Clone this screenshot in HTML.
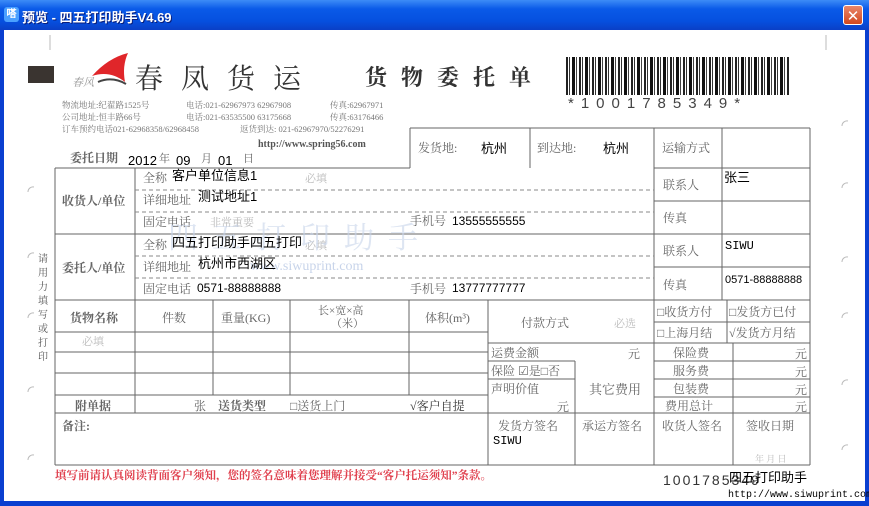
<!DOCTYPE html>
<html><head><meta charset="utf-8"><style>
html,body{margin:0;padding:0;width:869px;height:506px;overflow:hidden;background:#0a3fd0;}
#title{position:absolute;left:0;top:0;width:869px;height:30px;background:linear-gradient(#3d8cf7,#0a5ae8 30%,#0650df 70%,#0a3fc6);}
#title span{position:absolute;left:22px;top:7px;color:#fff;font:bold 13px "Liberation Sans","Noto Sans CJK SC",sans-serif;text-shadow:1px 1px #0a1e7a;}
#ico{position:absolute;left:4px;top:7px;width:15px;height:15px;background:#4aa0ff;border-radius:3px;color:#fff;font:bold 10px sans-serif;text-align:center;line-height:15px}
#close{position:absolute;left:843px;top:5px;width:20px;height:20px;background:linear-gradient(#e9866a,#d2481e);border:1px solid #fff;border-radius:3px;color:#fff;font:bold 15px "DejaVu Sans",sans-serif;text-align:center;line-height:20px;box-sizing:border-box}
#page{position:absolute;left:4px;top:30px;width:861px;height:471px;background:#fff;}
svg{position:absolute;left:0;top:0}
.b{position:absolute;left:566px;top:57px;width:224px;height:38px;background:repeating-linear-gradient(90deg,#222 0 2px,#fff 2px 3px,#333 3px 4px,#fff 4px 6px,#111 6px 9px,#fff 9px 10px,#444 10px 11px,#fff 11px 13px);}
</style></head><body>
<div id="title"><div id="ico">嗒</div><span>预览 - 四五打印助手V4.69</span><div id="close">✕</div></div>
<div id="page"></div>
<div class="b"></div>
<svg width="869" height="506" xmlns="http://www.w3.org/2000/svg" font-family="'Liberation Serif','Noto Serif CJK SC',serif">
<g stroke="#666" stroke-width="1" fill="none">
<path d="M410 128H810M55 168H410M410 128V168M530 128V168M654 128V300M722 128V300M810 128V465M55 168V465M55 465H810"/>
<path d="M55 234H810M654 168H810M654 201H810M654 267H810M55 300H810M135 168V413"/>
<path d="M55 332H409M55 352H488M55 373H488M55 395H488M55 413H810M213 300V395M290 300V395M409 300V395M488 300V465M409 332H488"/>
<path d="M654 322H810M727 300V343M488 343H810M488 361H575M575 361V413M654 361H810M654 379H810M488 379H575M654 397H810M733 343V413M575 413V465M654 300V465M733 413V465"/>
</g>
<g stroke="#888" stroke-dasharray="4,3" fill="none"><path d="M135 190H654M135 212H654M135 256H654M135 278H654"/></g>
<rect x="28" y="66" width="26" height="17" fill="#3a3430"/>
<path d="M92 76 Q108 58 128 53 Q122 66 125 82 Q110 70 92 76Z" fill="#e0262a"/>
<path d="M98 82 Q112 76 126 84" stroke="#444" stroke-width="2" fill="none"/>
<text x="72" y="86" font-size="11" fill="#999" font-style="italic">春风</text>
<text x="135" y="88" font-size="28" fill="#333" letter-spacing="18">春凤货运</text>
<text x="365" y="85" font-size="22" fill="#333" letter-spacing="14" font-weight="bold">货物委托单</text>
<text x="568" y="108" font-size="15" fill="#444" font-family="'Liberation Sans',sans-serif" letter-spacing="7">*1001785349*</text>
<g font-size="8.5" fill="#777">
<text x="62" y="108">物流地址:纪翟路1525号</text><text x="186" y="108">电话:021-62967973 62967908</text><text x="330" y="108">传真:62967971</text>
<text x="62" y="120">公司地址:恒丰路66号</text><text x="186" y="120">电话:021-63535500 63175668</text><text x="330" y="120">传真:63176466</text>
<text x="62" y="132">订车预约电话021-62968358/62968458</text><text x="240" y="132">返货到达: 021-62967970/52276291</text>
</g>
<text x="258" y="147" font-size="10" font-weight="bold" fill="#555">http://www.spring56.com</text>
<g font-size="12" fill="#666">
<text x="70" y="162" font-weight="bold">委托日期</text><text x="159" y="162" font-size="11">年</text><text x="201" y="162" font-size="11">月</text><text x="243" y="162" font-size="11">日</text>
<text x="418" y="152">发货地:</text><text x="537" y="152">到达地:</text><text x="662" y="152">运输方式</text>
<text x="62" y="205" font-weight="bold">收货人/单位</text>
<text x="143" y="182">全称</text><text x="143" y="204">详细地址</text><text x="143" y="226">固定电话</text><text x="410" y="225">手机号</text>
<text x="663" y="189">联系人</text><text x="663" y="222">传真</text>
<text x="62" y="272" font-weight="bold">委托人/单位</text>
<text x="143" y="249">全称</text><text x="143" y="271">详细地址</text><text x="143" y="293">固定电话</text><text x="410" y="293">手机号</text>
<text x="663" y="255">联系人</text><text x="663" y="289">传真</text>
<text x="70" y="322" font-weight="bold">货物名称</text><text x="162" y="322">件数</text><text x="221" y="322">重量(KG)</text>
<text x="318" y="314" font-size="11">长×宽×高</text><text x="331" y="327" font-size="11">（米）</text><text x="425" y="322">体积(m³)</text>
<text x="521" y="327">付款方式</text>
<text x="657" y="316">□收货方付</text><text x="729" y="316">□发货方已付</text>
<text x="657" y="337">□上海月结</text><text x="729" y="337">√发货方月结</text>
<text x="491" y="357">运费金额</text><text x="628" y="358">元</text><text x="673" y="357">保险费</text><text x="795" y="358">元</text>
<text x="491" y="375">保险 ☑是□否</text><text x="673" y="375">服务费</text><text x="795" y="376">元</text>
<text x="491" y="393">声明价值</text><text x="557" y="411">元</text><text x="589" y="394" font-size="13">其它费用</text><text x="673" y="393">包装费</text><text x="795" y="394">元</text>
<text x="665" y="410">费用总计</text><text x="795" y="411">元</text>
<text x="75" y="410" font-weight="bold">附单据</text><text x="194" y="410">张</text><text x="218" y="410" font-weight="bold">送货类型</text><text x="290" y="410">□送货上门</text><text x="410" y="410" fill="#333">√客户自提</text>
<text x="62" y="430" font-weight="bold">备注:</text><text x="498" y="430">发货方签名</text><text x="582" y="430">承运方签名</text><text x="662" y="430">收货人签名</text><text x="746" y="430">签收日期</text>
</g>
<g font-size="11" fill="#bbb"><text x="305" y="182">必填</text><text x="210" y="226">非常重要</text><text x="305" y="249">必填</text><text x="82" y="345">必填</text><text x="614" y="327">必选</text><text x="755" y="462" font-size="9">年  月  日</text></g>
<text x="168" y="248" font-size="30" fill="#c8d4ea" opacity="0.6" letter-spacing="14">四五打印助手</text>
<text x="250" y="270" font-size="14" fill="#c8d4ea">www.siwuprint.com</text>
<g font-family="'Liberation Sans','Noto Sans CJK SC',sans-serif" font-size="13" fill="#000">
<text x="128" y="165">2012</text><text x="176" y="165">09</text><text x="218" y="165">01</text>
<text x="481" y="153">杭州</text><text x="603" y="153">杭州</text>
<text x="172" y="180">客户单位信息1</text><text x="198" y="201">测试地址1</text><text x="452" y="225" font-size="12">13555555555</text>
<text x="724" y="182">张三</text>
<text x="172" y="247">四五打印助手四五打印</text><text x="198" y="268">杭州市西湖区</text><text x="197" y="292" font-size="12">0571-88888888</text><text x="452" y="292" font-size="12">13777777777</text>
<text x="725" y="283" font-size="11">0571-88888888</text>
</g>
<g font-family="'Liberation Mono',monospace" font-size="12" fill="#000"><text x="725" y="249">SIWU</text><text x="493" y="444">SIWU</text></g>
<g font-size="10" fill="#555"><text x="38" y="262">请</text><text x="38" y="276">用</text><text x="38" y="290">力</text><text x="38" y="304">填</text><text x="38" y="318">写</text><text x="38" y="332">或</text><text x="38" y="346">打</text><text x="38" y="360">印</text></g>
<text x="55" y="479" font-size="11.5" fill="#e0404e" font-weight="bold">填写前请认真阅读背面客户须知，您的签名意味着您理解并接受“客户托运须知”条款。</text>
<text x="663" y="485" font-size="14" fill="#333" font-family="'Liberation Sans',sans-serif" letter-spacing="2">1001785349</text>
<text x="729" y="482" font-size="13" fill="#000" font-family="'Liberation Sans','Noto Sans CJK SC',sans-serif">四五打印助手</text>
<rect x="726" y="486" width="139" height="14" fill="#fff"/>
<text x="728" y="497" font-size="10" fill="#000" font-family="'Liberation Mono',monospace">http://www.siwuprint.com</text>
<g stroke="#bbb" fill="none"><path d="M28 192a5 5 0 0 1 6-5M28 258a5 5 0 0 1 6-5M28 318a5 5 0 0 1 6-5M28 392a5 5 0 0 1 6-5M28 460a5 5 0 0 1 6-5M842 126a5 5 0 0 1 6-5M842 188a5 5 0 0 1 6-5M842 262a5 5 0 0 1 6-5M842 318a5 5 0 0 1 6-5M842 385a5 5 0 0 1 6-5M842 450a5 5 0 0 1 6-5M50 35V50M826 35V50"/></g>
</svg>
</body></html>
